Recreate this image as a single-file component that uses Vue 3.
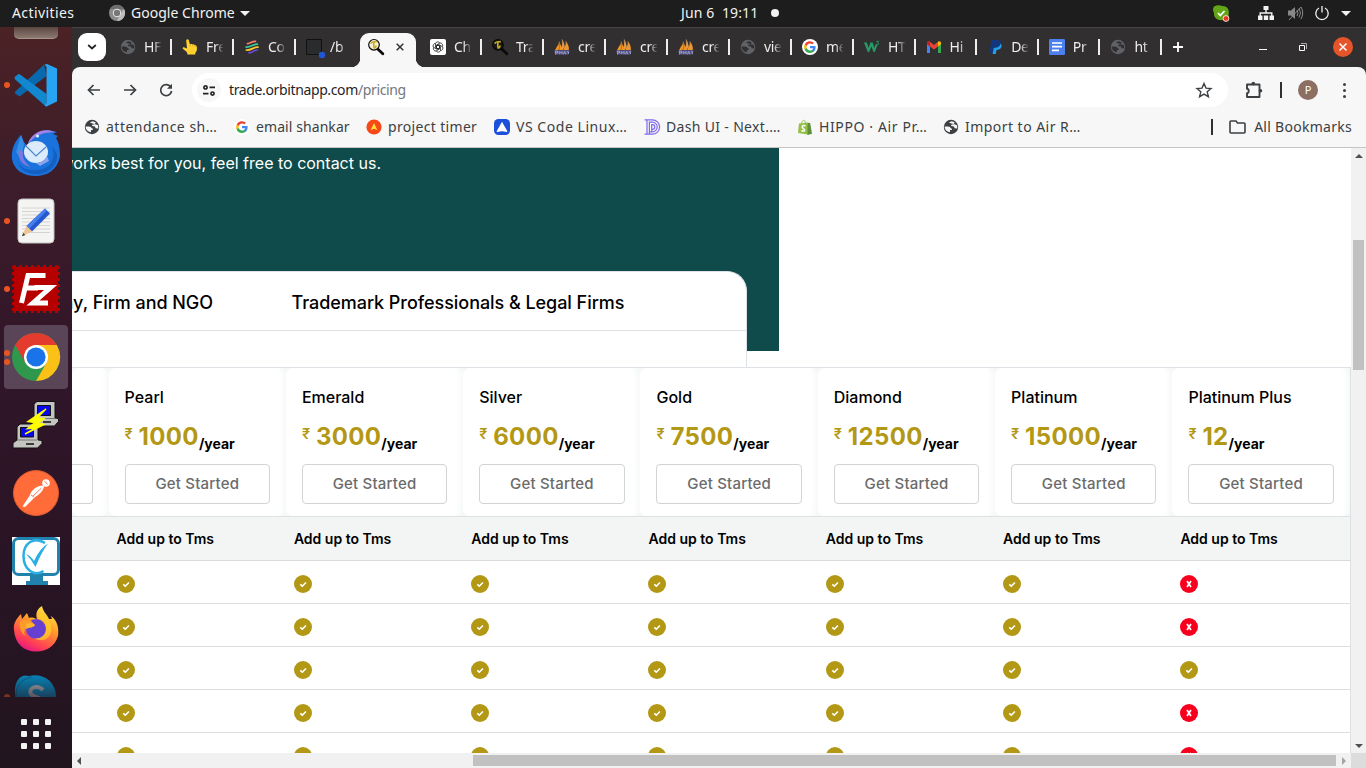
<script setup>
const globe = (c, bg) => `<circle cx="8" cy="8" r="7.2" fill="${c}"/><path d="M1.6 7.400 H5 Q7.400 7.400 7.800 9.200 Q9.600 9.400 8.800 11 H7 V13.300 Q3 12.800 1.800 9z M6 3.800 Q7 2.400 9 2.200 L11.800 3.600 L10.400 5.400 H8.600 L8 7 L11 7.600 L11.600 9.200 L14.200 9.400 Q14.500 7.600 13.800 6 Z" fill="${bg}"/>`
const googleG = `<path d="M14.6 8.2c0-.5 0-.9-.1-1.3H8v2.6h3.7c-.2.8-.7 1.6-1.4 2.1v1.8h2.3c1.3-1.2 2-3 2-5.2z" fill="#4285f4"/><path d="M8 15c1.9 0 3.5-.6 4.6-1.7l-2.3-1.8c-.6.4-1.400.7-2.300.7-1.800 0-3.300-1.200-3.900-2.900H1.800v1.800C2.900 13.500 5.300 15 8 15z" fill="#34a853"/><path d="M4.100 9.300a4.200 4.200 0 0 1 0-2.600V4.900H1.800a7 7 0 0 0 0 6.200z" fill="#fbbc05"/><path d="M8 3.800c1 0 2 .4 2.700 1.100l2-2A7 7 0 0 0 1.800 4.900l2.300 1.800C4.700 5 6.200 3.800 8 3.800z" fill="#ea4335"/>`
const pma = `<path d="M8.200.3 C10.800 4 11 8.500 8.800 11 L5.800 11 C8.300 7.500 8.700 4 8.200.3z M5.200 2.500 C6.200 6.500 5 9.500 4.400 11 L.8 11.300 C3.300 8.500 4.700 6 5.200 2.500z M11.800 2.200 C14.300 5 15.300 8.500 14.800 11 L10 11 C12.300 8 12.400 5 11.800 2.200z" fill="#f5941f"/><path d="M6.500 4.500L5.300 11h3z M3.500 6L1.500 11h3z M11 5l-1.500 6h4z" fill="#f5941f"/><path d="M8.200.3l.7 10.500M5.200 2.500l.3 8.500M11.800 2.200l.6 8.800" stroke="#b9a28e" stroke-width=".5"/><path d="M.3 11.200h15.400L14.500 15.600H1z" fill="#55558c"/><path d="M1.500 15.500v-3.300h2v1.800H2M5.300 15.200v-2.700l1.400 1.400 1.400-1.400v2.700M9.500 15.400l1.200-3 1.200 3M13 12.700h1.500v2.300" fill="none" stroke="#c6c6dc" stroke-width=".6"/>`
const magnify = (lens) => `<path d="M10 10.200l4.800 4.600" stroke="#0a0a0a" stroke-width="2.800" stroke-linecap="round"/><circle cx="6" cy="5.800" r="5.300" fill="${lens}" stroke="#0a0a0a" stroke-width="1.200"/><path d="M2.800 4.600C3.600 2.300 5.500 3 8.800 2.600M5.800 3.500v5M8 6.500C8 8.500 7 9 5.500 8.800" fill="none" stroke="#c9ab22" stroke-width="1.700"/>`
const petals = Array.from({ length: 6 }, (_, k) => `<path transform="rotate(${k * 60} 8 8)" d="M5 4.200C5 1.700 8.800.8 10.300 3.200M5 4.200v4.300l3 1.700 2.600-1.500"/>`).join('')

const favicons = {
  globeDim: globe('#5f6368', '#322f31'),
  globeDark: globe('#3c4043', '#f7f7f7'),
  google: `<circle cx="8" cy="8" r="8" fill="#fff"/><g transform="translate(1.200 1.200) scale(.85)">${googleG}</g>`,
  hand: `<path d="M4.200 1.500a1.300 1.300 0 0 1 2.500-.4L8 5.500l1.500-.8 1 .8 1.500-.3.900 1 1.400.2c1 2 .8 4.200 0 6.200l-1 1.500v1.400H5.500L4.800 13 .8 9.800C.2 8.700 1.400 8 2.500 8.500l2.500 1z" fill="#ffd02e"/><path d="M8 5.800l.6 1.800M10.500 5.700l.4 1.600M12.900 6.600l.1 1.300" stroke="#e7a41b" stroke-width=".8" fill="none"/>`,
  stripes: `<g fill="none" stroke-linecap="round" stroke-width="1.700"><path d="M3.500 4.600C6 5 8 2 11.500 2.300" stroke="#ff7c68"/><path d="M2 8C6.500 8.500 8.500 5 13.500 5.200" stroke="#35cda0"/><path d="M2.300 11C7 12 9.500 7.500 14 8.200" stroke="#ffc928"/><path d="M5 13.800C8.500 14 10 11 13.300 11" stroke="#6c49d8"/></g>`,
  terminal: `<path d="M.5.5h15v15H.5z" fill="#292b2d" stroke="#101112"/><circle cx="16" cy="16" r="3.200" fill="#2256d6"/>`,
  searchActive: magnify('#f5f1d8'),
  search: magnify('#171717'),
  gpt: `<rect width="16" height="16" rx="2" fill="#fff"/><g fill="none" stroke="#222" stroke-width=".95" transform="translate(1.400 1.400) scale(.825)">${petals}</g>`,
  pma,
  w3: `<path d="M0 3.500h2.900L4.600 9 6.400 3.500H8.700L10.300 9l1.300-3.500h2L10.900 13H9.500L7.400 7.500 5.200 13H3.800z" fill="#259b67"/><path d="M12.300 2.300h2.400l-1.200 1.500c1.500 0 1.500 2-.2 2l-1-.4" fill="none" stroke="#259b67" stroke-width=".9"/>`,
  gmail: `<path d="M1 4v10h3V7.500z" fill="#4285f4"/><path d="M15 4v10h-3V7.500z" fill="#34a853"/><path d="M1 4.200C1 2.500 3 1.800 4.200 2.900L8 6l3.800-3.100L12 7.500 8 10.500l-4-3-3-2.200z" fill="#ea4335"/><path d="M11.800 2.900C13 1.800 15 2.500 15 4.200v1.100l-3 2.200z" fill="#fbbc04"/><path d="M1 4.200C1 2.500 3 1.800 4 2.800v4.700L1 5.300z" fill="#c5221f"/>`,
  paypal: `<path d="M4.500 1h6c3 .2 3.800 2 3.200 4.300-.7 2.500-2.500 3.400-5 3.400H7L6 14H2.400z" fill="#12377f"/><path d="M13.600 4.600c1.500 1 1.200 3.200.2 4.700-1 1.300-2.500 1.500-4.300 1.600L8.800 15H5.600L6.800 8.700h2c2.600 0 4.300-1.300 4.800-4.100z" fill="#24a0e8"/>`,
  docs: `<rect width="16" height="16" rx="1.200" fill="#4b80ee"/><path d="M3 4h10M3 7.700h10M3 11.400h7" stroke="#fff" stroke-width="1.700"/>`,
  timer: `<circle cx="8" cy="8" r="7.600" fill="#f94818"/><path d="M8 4l3.300 7L8 9.700 4.700 11z" fill="#ffe23a"/>`,
  navy: `<rect width="16" height="16" rx="4.500" fill="#1c4fdb"/><path d="M8 2.800l5.200 9.200c.3.700-.2 1-.8.900-3-.9-5.800-.9-8.800 0-.6.100-1.100-.2-.8-.9z" fill="#fff"/>`,
  dash: `<g fill="none" stroke="#8068ed" stroke-width="1.200"><path d="M.6.800h7.800a7.200 7.200 0 0 1 0 14.400H.6M3 .8v14.400M5.400 15V3.200h3a4.800 4.800 0 0 1 0 9.600h-3M7.700 12.500V5.600h.7a2.400 2.400 0 0 1 0 4.800h-.7"/></g>`,
  shopify: `<path d="M2 4.500l8.500-1L12 15.800 1 14z" fill="#95bf47"/><path d="M10.500 3.500l2.700.8L15 14.800l-4.500 1.200z" fill="#5e8e3e"/><path d="M4.500 4.500C5 1.500 7.500-.5 8.500 3.900" fill="none" stroke="#95bf47"/><path d="M8.500 6.800C7 6 5.200 6.500 5.200 7.900c0 1.600 2.600 1.700 2.400 3.300-.2 1.300-2 1-3.100.1" fill="none" stroke="#fff" stroke-width="1.500"/>`,
}

const tabsBefore = [
  { icon: 'globeDim', title: 'HF' }, { icon: 'hand', title: 'Fre' },
  { icon: 'stripes', title: 'Co' }, { icon: 'terminal', title: '/b' },
]
const tabsAfter = [
  { icon: 'gpt', title: 'Ch' }, { icon: 'search', title: 'Tra' }, { icon: 'pma', title: 'cre' },
  { icon: 'pma', title: 'cre' }, { icon: 'pma', title: 'cre' }, { icon: 'globeDim', title: 'vie' },
  { icon: 'google', title: 'me' },
]
const tabsEnd = [
  { icon: 'w3', title: 'HT' }, { icon: 'gmail', title: 'Hi' }, { icon: 'paypal', title: 'De' },
  { icon: 'docs', title: 'Pr' }, { icon: 'globeDim', title: 'ht' },
]
const bookmarks = [
  { icon: 'globeDark', title: 'attendance sh…', w: 150, ls: .5 }, { icon: 'google', title: 'email shankar', w: 132, ls: .08 },
  { icon: 'timer', title: 'project timer', w: 128, ls: .33 }, { icon: 'navy', title: 'VS Code Linux…', w: 150, ls: .54 },
  { icon: 'dash', title: 'Dash UI - Next.…', w: 153, ls: .33 }, { icon: 'shopify', title: 'HIPPO · Air Pr…', w: 146, ls: .62 },
  { icon: 'globeDark', title: 'Import to Air R…', w: 140, ls: .46 },
]

const dock = [
  { name: 'code', dots: 1, svg: `<path d="M2.800 31 L32 3.500 L34.500 15 L7.500 35.500 L3.200 32.500z" fill="#0869ac"/><path d="M2.500 16 L7 12.800 L34.500 33 V46 L3.200 18.500z" fill="#1288d1"/><path d="M32.500 3.500 L35 3 L45 7.500 V40.500 L34.500 45.500 L32.500 44.500 L34.500 42 V6z" fill="#27a4f2"/>` },
  { name: 'mail', dots: 0, svg: `<path d="M0 30 C-1 20 3 12 9 6 L12 13 L15 17 C18 7 27 1 36 1 L45 3 L41 5 L46 7 L44 9 C48 15 48 24 48 28 C45 41 35 47 24 47 C11 47 2 41 0 30z" fill="#1a72dc"/><path d="M9 6l3 9-3 15-5-7z" fill="#3690e8"/><path d="M16 14C20 4 29 0 38 1.500l5 1.500-5 .5C29 4 23 7 18 13z" fill="#a481e5"/><path d="M4 29c4 13 17 14 27 11 9-3 13-12 9-23l5 8c1 12-9 20-21 20C14 45 7 40 4 29z" fill="#0c4da6" opacity=".5"/><path d="M7 20c-2 9 3 17 12 18-6-4-9-9-8-15z" fill="#7d78de"/><ellipse cx="24" cy="23" rx="12" ry="11" fill="#dcebfb"/><path d="M14 17l10 10 10-9" fill="none" stroke="#4689ca" stroke-width="1.200"/><circle cx="25.500" cy="7" r="1.500" fill="#dff"/><path d="M24 34c5-.5 10-3 11-7l2 5-9 5z" fill="#8ca3ec"/>` },
  { name: 'editor', dots: 1, svg: `<rect x="6" y="2" width="36" height="44" rx="4" fill="#f4f4f2" stroke="#c4c2c1"/><path d="M10 11h28M10 14.500h28M10 18h28M10 21.500h28M10 25h28M10 28.500h28M10 32h28M10 35.500h28" stroke="#c5c5c5" stroke-width=".7"/><path d="M33 11.500l5 5L20 34.500l-5.500-5.500z" fill="#2759ce"/><path d="M33 11.500l2 2L17 32l-2.500-3z" fill="#467eef"/><path d="M14.500 29l5.500 5.500L10 39z" fill="#f1c394"/><path d="M11.300 36l2 2-3.300 1.200z" fill="#333"/>` },
  { name: 'ftp', dots: 1, svg: `<rect x="2" y="2" width="44" height="44" fill="#b60000"/><path d="M1 2h46M1 46h46M2 1v46M46 1v46" fill="none" stroke="#b60000" stroke-width="4" stroke-dasharray="3 3"/><path d="M9.500 38L16 10.500h17.500M13 23h13M22.500 22.500h16L21 38h15" fill="none" stroke="#fff" stroke-width="5"/>` },
  { name: 'chrome', dots: 2, active: true, svg: `<circle cx="24" cy="24" r="24" fill="#2f984d"/><path d="M3.200 12A24 24 0 0 1 44.800 12H24L13.600 30z" fill="#e33b2e"/><path d="M44.800 12A24 24 0 0 1 24 48L34.400 30 24 12z" fill="#fbc116"/><circle cx="24" cy="24" r="12" fill="#fff"/><circle cx="24" cy="24" r="9.600" fill="#1a73e8"/>` },
  { name: 'putty', dots: 0, svg: `<g stroke="#111" stroke-width="1"><path d="M22 3l3-2.500h18V17l3.500.5v3L42.500 25H25l-3-5z" fill="#c4c4c1"/><path d="M25.500 4.500h13v10h-13z" fill="#0808e8"/><path d="M5 26l3-3h18v16l4 .5v3L25.500 47H1v-5l4-3z" fill="#c4c4c1"/><path d="M8.500 26.500h13v9.500h-13z" fill="#0808e8"/></g><path d="M5 39h20M25 17.500h18" stroke="#777"/><path d="M34 8L16 20.500l7 1-7.500 6L24 27 13 33l19-9.500-6-1.500 6-4.500-7-.5z" fill="#ff0" stroke="#ff0" stroke-width="1.500"/><path d="M31 21h8M14 43h8" stroke="#111" stroke-width="1.500"/>` },
  { name: 'postman', dots: 0, svg: `<circle cx="24" cy="24" r="22.500" fill="#ff6b39" stroke="#dc5b2f"/><circle cx="34" cy="14" r="3.800" fill="#fff"/><path d="M31 16.500c-6 0-12 5-13 9.500L10.500 37.500 13 38l9-9c4-3 9-6 10-11.500z" fill="#fff"/><path d="M29 19.500l-8 7.500M19 26l3 2M32.500 12l3 3.500" stroke="#ff6b39" stroke-width=".9"/>` },
  { name: 'desk', dots: 0, svg: `<path d="M0 0h48v48H0z" fill="#fff"/><rect x="1.500" y="1.500" width="45" height="36" rx="5" fill="none" stroke="#2182ae" stroke-width="3"/><path d="M18 39h13v5h5v4H14v-4h4z" fill="#2182ae"/><path d="M33 6C22-1 11.500 6 11.500 19c0 14 11 21 20 15" fill="none" stroke="#2bafe2" stroke-width="2.500"/><path d="M14 17q5 2 8 7Q28 11 36 6.500 29 16 23.500 30 19 22 14 17z" fill="#2bafe2"/>` },
  { name: 'firefox', dots: 0, svg: `<defs><linearGradient id="fx" x1=".8" y1="0" x2=".3" y2="1"><stop stop-color="#fff24b"/><stop offset=".4" stop-color="#ff9d28"/><stop offset=".8" stop-color="#ff3d57"/><stop offset="1" stop-color="#e31587"/></linearGradient></defs><path d="M2 25C1 18 5 13 9 9l1 5 5-6 2 5c3-1 5 0 8 1-2-6 1-11 5-13 1 6 5 8 7 13l3 0-1-3c7 5 8 13 7 20-3 10-11 15.500-22 15.500C12 46.500 3 39 2 25z" fill="url(#fx)"/><circle cx="24" cy="24" r="10" fill="#6640d1"/><path d="M8 17c5-3 10-3 13 1l2 2h-4c-2 1-5 2-6 4-1 2-1 4 0 7-4-4-6-8-5-14z" fill="#ff9b2b"/><path d="M14 19c4-2 7-1 9 1-1 3-6 2-9 4z" fill="#ffb52f"/><path d="M26 14c7 0 10 8 7 14-2 4-6 6-11 5 10 6 19-1 17-12-1-7-6-11-10-14z" fill="#ffd02c" opacity=".7"/>` },
  { name: 'skype', dots: 1, dim: true, svg: `<path d="M3 20C2 9 8 0 17 3c14-3 26 5 27 19l-3 22H5z" fill="#0687bb"/><path d="M4 24C4 13 9 6 20 4" fill="none" stroke="#06668f"/><path d="M31 17C25 11 16 15 19 21c2 4 12 3 12 8" fill="none" stroke="#a8b2b6" stroke-width="4"/>` },
]

const plans = [
  ['Pearl', '1000'], ['Emerald', '3000'], ['Silver', '6000'], ['Gold', '7500'],
  ['Diamond', '12500'], ['Platinum', '15000'], ['Platinum Plus', '12'],
]
const excluded = [true, true, false, true, true]
</script>

<template>
  <div class="desktop">
    <header class="topbar">
      <span class="activities">Activities</span>
      <svg class="appicon" width="16" height="16" viewBox="0 0 16 16"><circle cx="8" cy="8" r="8" fill="#8b8b8b" /><path d="M1 4a8 8 0 0 1 14 0H8z" fill="#6d6d6d" /><path d="M15 4a8 8 0 0 1-7 12l4-8z" fill="#bdbdbd" /><circle cx="8" cy="8" r="4.200" fill="#e8e8e8" /><circle cx="8" cy="8" r="3.200" fill="#777" /></svg>
      <span class="appname">Google Chrome</span>
      <svg class="appcaret" width="10" height="5" viewBox="0 0 10 5"><path d="M0 0h10L5 5z" fill="#f2f2f2" /></svg>
      <span class="clock">Jun 6&nbsp; 19:11</span><i class="notice"></i>
      <div class="tray">
        <svg width="17" height="17" viewBox="0 0 17 17"><path d="M1 1.500Q5-.5 9 1c5-.5 8 4 6.500 9 1 4-3 6.500-6 5C4 16 .5 12 1 8-.5 5 0 3 1 1.500z" fill="#62a617" /><path d="M5 8l2.300 2.500L11.500 6" fill="none" stroke="#fff" stroke-width="1.800" /><circle cx="13" cy="13.500" r="2.900" fill="#e32" stroke="#fff" stroke-width=".8" /></svg>
        <svg class="net" width="16" height="14" viewBox="0 0 16 14"><path d="M5.500 0h5v4h-5zM0 9.500h4.500V14H0zM5.800 9.500h4.400V14H5.800zM11.500 9.500H16V14h-4.500z" fill="#f2f2f2" /><path d="M8 4v3M2.200 10V7h11.600v3" fill="none" stroke="#f2f2f2" stroke-width="1.400" /></svg>
        <svg class="vol" width="16" height="16" viewBox="0 0 16 16"><path d="M1 5.500h3L8 2v12l-4-3.500H1z" fill="#888" /><path d="M10 5q2 3 0 6M12 3.500q3 4.500 0 9M14 2q3.500 6 0 12M2 15L14 2" fill="none" stroke="#888" /></svg>
        <svg class="power" width="14" height="14" viewBox="0 0 14 14"><path d="M4 2a6.200 6.200 0 1 0 6 0M7 0v6.500" fill="none" stroke="#f2f2f2" stroke-width="1.300" /></svg>
        <svg class="menu-caret" width="10" height="5" viewBox="0 0 10 5"><path d="M0 0h10L5 5z" fill="#f2f2f2" /></svg>
      </div>
    </header>

    <div class="workspace">
      <aside class="dock">
        <div class="stub"></div>
        <div class="apps">
          <div v-for="app in dock" :key="app.name" class="app" :class="{ current: app.active, dim: app.dim }">
            <div class="dots"><i v-for="n in app.dots" :key="n"></i></div>
            <svg width="48" height="48" viewBox="0 0 48 48" v-html="app.svg"></svg>
          </div>
        </div>
        <div class="launcher"><i v-for="n in 9" :key="n"></i></div>
      </aside>

      <section class="browser">
        <div class="tabstrip">
          <button class="tabsearch"><svg width="10" height="6" viewBox="0 0 10 6"><path d="M1.200 1L5 4.500 8.800 1" fill="none" stroke="#222" stroke-width="1.700" /></svg></button>
          <div v-for="(t, i) in tabsBefore" :key="'b' + i" class="tab" :class="{ last: i === 3 }">
            <svg width="16" height="16" viewBox="0 0 16 16" v-html="favicons[t.icon]"></svg><span>{{ t.title }}</span>
          </div>
          <div class="tab active">
            <svg width="16" height="16" viewBox="0 0 16 16" v-html="favicons.searchActive"></svg>
            <svg class="x" width="8" height="8" viewBox="0 0 8 8"><path d="M.7.7l6.600 6.600M7.300.7L.7 7.300" stroke="#333" stroke-width="1.500" /></svg>
          </div>
          <div v-for="(t, i) in tabsAfter" :key="'a' + i" class="tab">
            <svg width="16" height="16" viewBox="0 0 16 16" v-html="favicons[t.icon]"></svg><span>{{ t.title }}</span>
          </div>
          <div v-for="(t, i) in tabsEnd" :key="'e' + i" class="tab narrow">
            <svg width="16" height="16" viewBox="0 0 16 16" v-html="favicons[t.icon]"></svg><span>{{ t.title }}</span>
          </div>
          <svg class="plus" width="10" height="10" viewBox="0 0 10 10"><path d="M5 0v10M0 5h10" stroke="#fff" stroke-width="1.800" /></svg>
          <div class="winctl">
            <svg width="8" height="10" viewBox="0 0 8 10"><path d="M0 7.500h8" stroke="#fff" stroke-width="1" /></svg>
            <svg width="8" height="9" viewBox="0 0 8 9"><path d="M.5 2.500h5v5h-5z" fill="none" stroke="#fff" /><path d="M2 .5h5.500V6" fill="none" stroke="#aaa" /></svg>
            <div class="close"><svg width="8" height="8" viewBox="0 0 8 8"><path d="M.5.5l7 7M7.500.5l-7 7" stroke="#fff" stroke-width="1.500" /></svg></div>
          </div>
        </div>

        <div class="toolbar">
          <svg class="nav" width="14" height="12" viewBox="0 0 14 12"><path d="M13 6H2M6.500 1L1.500 6l5 5" fill="none" stroke="#3c4043" stroke-width="1.700" /></svg>
          <svg class="nav" width="14" height="12" viewBox="0 0 14 12"><path d="M1 6h11M7.500 1l5 5-5 5" fill="none" stroke="#3c4043" stroke-width="1.700" /></svg>
          <svg class="nav" width="14" height="14" viewBox="0 0 14 14"><path d="M12 4.500A5.500 5.500 0 1 0 12.600 8" fill="none" stroke="#3c4043" stroke-width="1.700" /><path d="M13 .8v5H8z" fill="#3c4043" /></svg>
          <div class="omnibox">
            <div class="site"><svg width="12" height="11" viewBox="0 0 12 11"><g fill="none" stroke="#222" stroke-width="1.700"><circle cx="2.500" cy="2.400" r="1.600" /><path d="M6.500 2.400H12M0 8.600h5.500" /><circle cx="9.500" cy="8.600" r="1.600" /></g></svg></div>
            <div class="url"><b>trade.orbitnapp.com</b><span>/pricing</span></div>
            <svg class="star" width="16" height="16" viewBox="0 0 16 16"><path d="M8 1.500l2 4.600 5 .4-3.800 3.300 1.200 4.900L8 12.100l-4.400 2.600 1.200-4.900L1 6.500l5-.4z" fill="none" stroke="#3c4043" stroke-width="1.400" /></svg>
          </div>
          <svg class="puzzle" width="18" height="18" viewBox="0 0 18 18"><path d="M2 3.500h12.500V16H2v-3.800c2.300-.2 2.300-4.200 0-4.400z" fill="none" stroke="#3c4043" stroke-width="1.900" stroke-linejoin="round" /><circle cx="8.300" cy="2.600" r="1.800" fill="#3c4043" /><circle cx="15.500" cy="9.800" r="1.800" fill="#3c4043" /></svg>
          <i class="bar"></i>
          <div class="avatar">P</div>
          <div class="kebab"><i></i><i></i><i></i></div>
        </div>

        <div class="bookmarks">
          <div v-for="(b, i) in bookmarks" :key="i" class="bookmark" :style="{ width: b.w + 'px' }">
            <svg width="16" height="16" viewBox="0 0 16 16" v-html="favicons[b.icon]"></svg><span :style="{ letterSpacing: b.ls + 'px' }">{{ b.title }}</span>
          </div>
          <div class="allbm"><i class="bar"></i><svg width="17" height="14" viewBox="0 0 17 14"><path d="M1 2.500V12q0 1 1 1h13q1 0 1-1V4q0-1-1-1H8.500L7 1H2Q1 1 1 2z" fill="none" stroke="#3c4043" stroke-width="1.600" /></svg><span>All Bookmarks</span></div>
        </div>

        <div class="viewport">
          <main class="page">
            <div class="hero">
              <p><span>works best for you, feel free to contact us.</span></p>
              <div class="panel">
                <div class="kinds"><span class="company">Company, Firm and NGO</span><span class="pro">Trademark Professionals &amp; Legal Firms</span></div>
              </div>
            </div>
            <div class="plans">
              <div class="plan part"><button></button></div>
              <div v-for="p in plans" :key="p[0]" class="plan">
                <h3>{{ p[0] }}</h3>
                <div class="price"><sup>₹</sup><strong>{{ p[1] }}</strong><em>/year</em></div>
                <button>Get Started</button>
              </div>
            </div>
            <div class="row heading"><div class="cell part"></div><div v-for="p in plans" :key="p[0]" class="cell">Add up to Tms</div></div>
            <div v-for="(no, r) in excluded" :key="r" class="row">
              <div class="cell part"></div>
              <div v-for="(p, c) in plans" :key="c" class="cell">
                <span class="mark" :class="{ no: no && c === 6 }">
                  <svg v-if="no && c === 6" width="18" height="18" viewBox="0 0 18 18"><path d="M7 6l4 6M11 6l-4 6" stroke="#fff" stroke-width="1.700" /></svg>
                  <svg v-else width="18" height="18" viewBox="0 0 18 18"><path d="M6.300 9.300l2 1.900 3.600-3.700" fill="none" stroke="#fff" stroke-width="1.600" /></svg>
                </span>
              </div>
            </div>
          </main>
          <div class="vscroll"><i class="up"></i><div class="thumb"></div><i class="down"></i></div>
          <div class="hscroll"><i class="left"></i><div class="thumb"></div><i class="right"></i></div>
          <div class="corner"></div>
        </div>
      </section>
    </div>
  </div>
</template>

<style>
html, body { overflow: hidden; background: #fff; }
</style>

<style scoped>
* { box-sizing: border-box; }
svg { display: block; flex: none; overflow: visible; }
button { font: inherit; padding: 0; border: 0; }
i { font-style: normal; display: block; flex: none; }
.desktop { width: 1366px; height: 768px; display: flex; flex-direction: column; overflow: hidden; font-family: "Noto Sans", "Open Sans", sans-serif; }
.topbar { height: 27px; background: #1d1d1d; color: #f2f2f2; display: flex; align-items: center; font-size: 14px; line-height: 26px; padding: 0 0 1px 12px; white-space: nowrap; flex: none; }
.activities { width: 97px; letter-spacing: .4px; }
.appname { margin-left: 6px; width: 104px; letter-spacing: .03px; }
.appcaret { margin-left: 5px; }
.clock { margin-left: 431px; width: 78px; letter-spacing: .12px; }
.notice { width: 8px; height: 8px; border-radius: 50%; background: #f2f2f2; margin-left: 12px; }
.tray { margin-left: auto; display: flex; align-items: center; padding-right: 15px; }
.net { margin-left: 28px; }
.vol { margin-left: 13px; }
.power { margin-left: 12px; }
.menu-caret { margin-left: 12px; }
.workspace { display: flex; flex: 1; min-height: 0; }
.dock { width: 72px; flex: none; height: 741px; background: linear-gradient(#4b2225, #3d1d2a 20%, #311629 45%, #281424 75%, #21151e); display: flex; flex-direction: column; overflow: hidden; }
.stub { height: 12px; width: 44px; margin: 0 0 12px 14px; border-radius: 0 0 5px 5px; background: linear-gradient(#5b4640, #8b7970); flex: none; border-bottom: 1px solid #a39389; }
.apps { height: 646px; overflow: hidden; flex: none; }
.app { height: 68px; display: flex; align-items: center; }
.app.current { height: 64px; margin: 2px 4px; background: #5a4457; border-radius: 4px; }
.app.current .dots { width: 8px; padding-left: 0; }
.dots { width: 12px; padding-left: 4px; display: flex; flex-direction: column; gap: 3px; }
.dots i { width: 6px; height: 6px; border-radius: 50%; background: #e95420; }
.dim .dots { opacity: .45; }
.dim svg { mask-image: linear-gradient(#000, rgba(0, 0, 0, .4) 50%); }
.launcher { display: grid; grid-template-columns: repeat(3, 6px); gap: 6px; margin: 22px 0 0 21px; }
.launcher i { width: 6px; height: 6px; background: #f2f2f2; border-radius: 1px; }
.browser { flex: 1; min-width: 0; display: flex; flex-direction: column; background: #322f31; }
.tabstrip { height: 40px; border-top: 1px solid #474446; background: #322f31; display: flex; align-items: center; flex: none; color: #eee; padding-bottom: 1px; }
.tabsearch { width: 28px; height: 28px; margin: 0 4px 0 6px; border-radius: 9px; background: #fff; display: grid; place-items: center; }
.tab { width: 62px; height: 38px; display: flex; align-items: center; padding-left: 10px; position: relative; flex: none; }
.tab.narrow { width: 61.6px; }
.tab span { margin-left: 8px; width: 17px; overflow: hidden; white-space: nowrap; font-size: 14px; line-height: 20px; letter-spacing: -.3px; -webkit-mask-image: linear-gradient(90deg, #000 55%, rgba(0, 0, 0, .1)); }
.tab::after { content: ""; position: absolute; right: 0; top: 11px; width: 2px; height: 16px; background: #eee; }
.tab.last::after { display: none; }
.tab.active { width: 56px; height: 34px; margin: 5px 4px 0 2px; background: #f7f7f7; border-radius: 9px 9px 0 0; padding: 0 0 6px 8px; align-self: flex-start; }
.tab.active::after { inset: auto -9px 0 -9px; width: auto; height: 9px; background: radial-gradient(circle at 0 0, transparent 9px, #f7f7f7 9.500px) 0 0 / 9px 9px no-repeat, radial-gradient(circle at 100% 0, transparent 9px, #f7f7f7 9.500px) 100% 0 / 9px 9px no-repeat; }
.tab.active .x { margin-left: 12px; }
.plus { margin-left: 11px; }
.winctl { margin-left: auto; display: flex; align-items: center; padding-right: 13px; gap: 32px; }
.close { width: 20px; height: 20px; border-radius: 50%; background: #e65529; display: grid; place-items: center; margin-left: -6px; }
.toolbar { height: 46px; background: #f7f7f7; border-radius: 8px 8px 0 0; display: flex; align-items: center; padding-left: 15px; flex: none; }
.nav { margin-right: 22px; }
.nav + .nav + .nav { margin-right: 19px; }
.omnibox { width: 1036px; height: 34px; border-radius: 17px; background: #fff; display: flex; align-items: center; padding: 0 16px 0 5px; }
.site { width: 24px; height: 24px; border-radius: 50%; background: #f7f7f7; display: grid; place-items: center; }
.url { margin-left: 8px; font-size: 14px; letter-spacing: -.37px; padding-bottom: 2px; }
.url b { font-weight: 400; color: #1f1f1f; }
.url span { color: #74777b; }
.star { margin-left: auto; }
.puzzle { margin-left: 17px; }
.bar { width: 2px; height: 16px; background: #303030; }
.toolbar .bar { margin-left: 17px; }
.avatar { margin-left: 16px; width: 20px; height: 20px; border-radius: 50%; background: #8d6e63; color: #fff; font-size: 11px; line-height: 20px; text-align: center; }
.kebab { margin-left: 25px; display: grid; gap: 3px; }
.kebab i { width: 3px; height: 3px; border-radius: 50%; background: #3c4043; }
.bookmarks { height: 35px; background: #f7f7f7; border-bottom: 1px solid #c4c4c4; display: flex; align-items: center; padding: 0 14px 7px 12px; color: #3c4043; font-size: 14px; flex: none; white-space: nowrap; }
.bookmark { display: flex; align-items: center; flex: none; }
.bookmark span { margin-left: 6px; }
.allbm { margin-left: auto; display: flex; align-items: center; }
.allbm svg { margin: 0 8px 0 16px; }
.allbm span { letter-spacing: .28px; }
.viewport { height: 620px; display: grid; grid-template-columns: 1279px 15px; grid-template-rows: 605px 15px; background: #fff; }
.page { overflow: hidden; font-family: Inter, sans-serif; color: #000; background: #fff; }
.hero { width: 707px; height: 203px; background: #104b4b; }
.hero p { margin: 0; height: 123px; color: #fff; font-size: 16px; line-height: 31px; display: flex; justify-content: flex-end; width: 309px; white-space: nowrap; }
.panel { width: 675px; height: 96px; background: #fff; border: 1px solid #dee2e6; border-left: 0; border-bottom: 0; border-radius: 0 20px 0 0; }
.kinds { height: 59px; border-bottom: 1px solid #dee2e6; font-size: 18px; font-weight: 500; line-height: 62px; display: flex; white-space: nowrap; letter-spacing: -.05px; }
.company { width: 141px; display: flex; justify-content: flex-end; }
.pro { margin-left: 78.500px; }
.plans { height: 150px; margin-top: 16px; border-top: 1px solid #dee2e6; border-bottom: 1px solid #dee2e6; display: flex; background: #f5f8f7; width: 1279px; border-right: 1px solid #dee2e6; }
.plan { width: 177.300px; height: 148px; flex: none; padding: 21px 16px 0; background: #fff; border-radius: 7px; box-shadow: inset -8px 0 8px -7px #f1f6f5; }
.plan.part { width: 36.600px; padding: 0; }
.plan.part button { width: 21px; margin-top: 96px; border-left: 0; border-radius: 0 4px 4px 0; }
.plan h3 { margin: 0; font-size: 16px; line-height: 17px; font-weight: 500; }
.price { height: 58px; white-space: nowrap; display: flex; align-items: flex-start; }
.price sup { font-size: 14.500px; line-height: 16px; color: #b39816; width: 14px; margin-top: 20px; font-weight: 600; }
.price strong { font-size: 24px; line-height: 28px; color: #b39816; margin-top: 17px; font-weight: 700; letter-spacing: .35px; }
.price em { font-style: normal; font-weight: 700; font-size: 14px; line-height: 18px; margin-top: 29px; }
.plan button { display: block; width: 145.400px; height: 40px; border: 1px solid #d2d3d4; background: #fff; border-radius: 4px; color: #6b6b6b; font-size: 15px; line-height: 38px; font-weight: 500; letter-spacing: .2px; }
.row { height: 43px; width: 1279px; display: flex; border-bottom: 1px solid #dedede; border-right: 1px solid #dee2e6; }
.heading { height: 44px; background: #f2f5f4; font-size: 14px; font-weight: 600; border-bottom-color: #dadada; }
.cell { width: 177.300px; padding-left: 8px; display: flex; align-items: center; flex: none; }
.cell.part { width: 36.600px; }
.mark { width: 18px; height: 18px; border-radius: 50%; background: #b39816; margin-top: 3px; }
.mark.no { background: #f8001d; }
.vscroll { background: #f1f1f1; display: flex; flex-direction: column; align-items: center; padding: 6px 0 5px; }
.vscroll .thumb { width: 11px; height: 130px; background: #c1c1c1; margin-top: 82px; }
.up { border: 4px solid transparent; border-top: 0; border-bottom: 4px solid #505050; }
.down { border: 4px solid transparent; border-bottom: 0; border-top: 4px solid #505050; margin-top: auto; }
.hscroll { background: #f1f1f1; display: flex; align-items: center; padding: 0 5px; }
.hscroll .thumb { width: 863px; height: 11px; background: #c1c1c1; margin-left: 392px; }
.left { border: 4px solid transparent; border-left: 0; border-right: 4px solid #505050; }
.right { border: 4px solid transparent; border-right: 0; border-left: 4px solid #a3a3a3; margin-left: auto; }
.corner { background: #dcdcdc; }
</style>
